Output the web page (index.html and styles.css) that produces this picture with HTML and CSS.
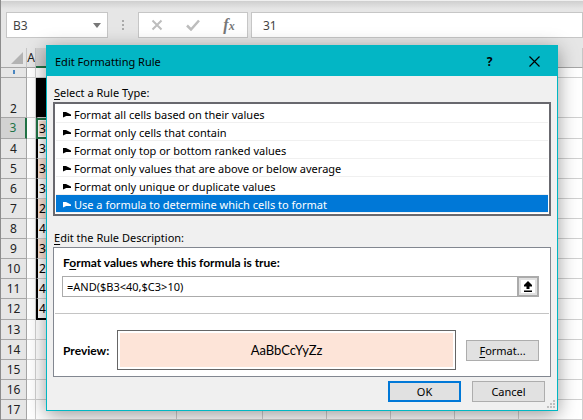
FILE: index.html
```html
<!DOCTYPE html>
<html lang="en">
<head>
  <meta charset="UTF-8">
  <meta name="viewport" content="width=device-width, initial-scale=1.0">
  <title>Edit Formatting Rule</title>
  <link rel="stylesheet" href="styles.css">
</head>
<body>
  <div class="workbook">
    <div class="formula-bar">
      <button type="button" class="name-box">
        <span>B3</span>
        <svg width="8" height="5" viewBox="0 0 8 5"><path d="M0 0h8L4 5z" fill="#777"/></svg>
      </button>
      <svg class="grip" width="2" height="10" viewBox="0 0 2 10"><path d="M0 0h2v2H0zM0 4h2v2H0zM0 8h2v2H0z" fill="#aaa"/></svg>
      <div class="formula-tools">
        <button type="button" class="tool" aria-label="Cancel entry">
          <svg width="12" height="12" viewBox="0 0 12 12"><path d="M1.500 1.500l9 9M10.500 1.500l-9 9" stroke="#bdbdbd" stroke-width="2" fill="none"/></svg>
        </button>
        <button type="button" class="tool" aria-label="Enter">
          <svg width="14" height="12" viewBox="0 0 14 12"><path d="M1 6.500l4 4 8-9" stroke="#bdbdbd" stroke-width="2.500" fill="none"/></svg>
        </button>
        <button type="button" class="tool fx" aria-label="Insert function"><i>f</i><i class="fx-small">x</i></button>
      </div>
      <input class="formula-input" type="text" value="31" aria-label="Formula bar">
    </div>

    <table class="sheet">
      <colgroup>
        <col class="col-head"><col class="col-a"><col class="col-b"><col class="col-c">
        <col class="col-std"><col class="col-std"><col class="col-std"><col class="col-std"><col class="col-std">
      </colgroup>
      <thead>
        <tr>
          <th class="corner"><svg width="12" height="12" viewBox="0 0 12 12"><path d="M12 0v12H0z" fill="#b3b3b3"/></svg></th>
          <th>A</th><th class="active"></th><th></th><th></th><th></th><th></th><th></th><th></th>
        </tr>
      </thead>
      <tbody>
        <tr class="row-1"><th><span class="tick"></span></th><td></td><td></td><td></td><td></td><td></td><td></td><td></td><td></td></tr>
        <tr class="row-2"><th>2</th><td></td><td class="data title"></td><td></td><td></td><td></td><td></td><td></td><td></td></tr>
        <tr class="tall"><th class="active">3</th><td></td><td class="data hit selected">31</td><td></td><td></td><td></td><td></td><td></td><td></td></tr>
        <tr><th>4</th><td></td><td class="data">38</td><td></td><td></td><td></td><td></td><td></td><td></td></tr>
        <tr><th>5</th><td></td><td class="data hit">36</td><td></td><td></td><td></td><td></td><td></td><td></td></tr>
        <tr><th>6</th><td></td><td class="data">35</td><td></td><td></td><td></td><td></td><td></td><td></td></tr>
        <tr><th>7</th><td></td><td class="data hit">28</td><td></td><td></td><td></td><td></td><td></td><td></td></tr>
        <tr><th>8</th><td></td><td class="data">41</td><td></td><td></td><td></td><td></td><td></td><td></td></tr>
        <tr><th>9</th><td></td><td class="data hit">34</td><td></td><td></td><td></td><td></td><td></td><td></td></tr>
        <tr><th>10</th><td></td><td class="data">27</td><td></td><td></td><td></td><td></td><td></td><td></td></tr>
        <tr><th>11</th><td></td><td class="data">42</td><td></td><td></td><td></td><td></td><td></td><td></td></tr>
        <tr class="tall"><th>12</th><td></td><td class="data last">45</td><td></td><td></td><td></td><td></td><td></td><td></td></tr>
        <tr><th>13</th><td></td><td></td><td></td><td></td><td></td><td></td><td></td><td></td></tr>
        <tr><th>14</th><td></td><td></td><td></td><td></td><td></td><td></td><td></td><td></td></tr>
        <tr><th>15</th><td></td><td></td><td></td><td></td><td></td><td></td><td></td><td></td></tr>
        <tr><th>16</th><td></td><td></td><td></td><td></td><td></td><td></td><td></td><td></td></tr>
        <tr><th>17</th><td></td><td></td><td></td><td></td><td></td><td></td><td></td><td></td></tr>
        <tr><th></th><td></td><td></td><td></td><td></td><td></td><td></td><td></td><td></td></tr>
      </tbody>
    </table>
  </div>

  <form class="dialog" role="dialog" aria-labelledby="dialogTitle">
    <div class="title-bar">
      <span id="dialogTitle">Edit Formatting Rule</span>
      <button type="button" class="title-button help" aria-label="Help">?</button>
      <button type="button" class="title-button" aria-label="Close">
        <svg width="11" height="11" viewBox="0 0 11 11"><path d="M.5.5l10 10M10.500.5l-10 10" stroke="#000" stroke-width="1.200" fill="none"/></svg>
      </button>
    </div>

    <div class="dialog-body">
      <div class="section-label" id="ruleTypeLabel"><u>S</u>elect a Rule Type:</div>
      <div class="rule-list" role="radiogroup" aria-labelledby="ruleTypeLabel">
        <label class="rule"><input type="radio" name="rule"><span>Format all cells based on their values</span></label>
        <label class="rule"><input type="radio" name="rule"><span>Format only cells that contain</span></label>
        <label class="rule"><input type="radio" name="rule"><span>Format only top or bottom ranked values</span></label>
        <label class="rule"><input type="radio" name="rule"><span>Format only values that are above or below average</span></label>
        <label class="rule"><input type="radio" name="rule"><span>Format only unique or duplicate values</span></label>
        <label class="rule"><input type="radio" name="rule" checked><span>Use a formula to determine which cells to format</span></label>
      </div>

      <div class="section-label description-label"><u>E</u>dit the Rule Description:</div>
      <div class="panel">
        <label class="bold" for="formula">F<u>o</u>rmat values where this formula is true:</label>
        <div class="formula-row">
          <input type="text" id="formula" value="=AND($B3&lt;40,$C3&gt;10)">
          <button type="button" class="collapse" aria-label="Collapse dialog">
            <svg width="10" height="11" viewBox="0 0 10 11"><path d="M5 0l4 4v1.500H6.500V8h-3V5.500H1V4zM1 9.500h8V11H1z" fill="#000"/></svg>
          </button>
        </div>
        <div class="divider"></div>
        <div class="preview-row">
          <span class="bold">Preview:</span>
          <div class="preview"><div class="preview-fill">AaBbCcYyZz</div></div>
          <button type="button" class="button"><span><u>F</u>ormat...</span></button>
        </div>
      </div>

      <div class="actions">
        <button type="submit" class="button default">OK</button>
        <button type="button" class="button">Cancel</button>
      </div>
    </div>
    <svg class="resize" width="8" height="8" viewBox="0 0 8 8"><path d="M6 0h2v2H6zM3 3h2v2H3zM6 3h2v2H6zM0 6h2v2H0zM3 6h2v2H3zM6 6h2v2H6z" fill="#bfbfbf"/></svg>
  </form>
</body>
</html>
```
FILE: styles.css
```css
* {
  box-sizing: border-box;
}
body {
  margin: 0;
  height: 100vh;
  overflow: hidden;
  position: relative;
  background-color: #e6e6e6;
  color: #000;
  font-family: "Noto Sans", "Open Sans", sans-serif;
  font-size: 12px;
}
button,
input {
  font: inherit;
  color: inherit;
  margin: 0;
  padding: 0;
}
u {
  text-underline-offset: 2px;
}

/* Workbook behind the dialog */
.workbook {
  border-left: 1px solid #8c8c8c;
  overflow: hidden;
}
.formula-bar {
  display: flex;
  align-items: center;
  height: 48px;
  padding: 2px 0 0 5px;
  background: linear-gradient(#f0f0f0 1px, #cfcfcf 1px, #e6e6e6 9px);
}
.name-box,
.formula-tools,
.formula-input {
  height: 26px;
  background-color: #fff;
  border: 1px solid #c6c6c6;
}
.name-box {
  display: flex;
  align-items: center;
  justify-content: space-between;
  width: 102px;
  padding: 0 6px;
  color: #444;
}
.grip {
  margin: 0 14px;
}
.formula-tools {
  display: flex;
  align-items: center;
  justify-content: space-around;
  width: 110px;
  margin-right: 3px;
}
.tool {
  display: flex;
  align-items: center;
  justify-content: center;
  width: 24px;
  border: none;
  background: none;
}
.fx {
  align-items: baseline;
  font: bold 16px "Liberation Serif", serif;
  color: #777;
}
.fx-small {
  font-size: 12px;
}
.formula-input {
  flex: 1;
  min-width: 0;
  padding: 0 11px;
  color: #444;
}

.sheet {
  width: 582px;
  table-layout: fixed;
  border-collapse: separate;
  border-spacing: 0;
  background-color: #fff;
  line-height: 16px;
}
.col-head {
  width: 26px;
}
.col-a {
  width: 9px;
}
.col-b {
  width: 141px;
}
.col-c {
  width: 86px;
}
.col-std {
  width: 64px;
}
.sheet th,
.sheet td {
  height: 20px;
  padding: 0;
  border-right: 1px solid #d0d0d0;
  border-bottom: 1px solid #d0d0d0;
  overflow: hidden;
}
.sheet th {
  background-color: #e6e6e6;
  border-color: #a6a6a6;
  color: #222;
  font-weight: normal;
}
.sheet thead th {
  border-right-color: #c6c6c6;
}
.sheet thead .active {
  background-color: #d2d2d2;
  border-bottom: 2px solid #217346;
}
.sheet .corner {
  padding-left: 10px;
}
.corner svg {
  display: block;
}
.sheet .row-1 th,
.sheet .row-1 td {
  height: 10px;
  line-height: 4px;
  vertical-align: top;
}
.tick {
  display: inline-block;
  width: 2px;
  height: 4px;
  background-color: #4a86c0;
}
.sheet .row-2 th,
.sheet .row-2 td {
  height: 40px;
  vertical-align: bottom;
}
.sheet .tall th,
.sheet .tall td {
  height: 21px;
}
.sheet tbody .active {
  background-color: #d2d2d2;
  border-right: 2px solid #217346;
  color: #217346;
}
.sheet .data {
  padding-left: 1px;
  border-left: 2px solid #000;
}
.sheet .title {
  background-color: #000;
}
.sheet .hit {
  background-color: #fce4d6;
}
.sheet .selected {
  border: 2px solid #217346;
  box-shadow: inset 0 0 0 1px #fff;
}
.sheet .last {
  border-bottom: 2px solid #000;
}

/* Dialog */
.dialog {
  position: absolute;
  top: 45px;
  left: 46px;
  right: 25px;
  background-color: #f0f0f0;
  border: 1px solid #00b7c3;
  box-shadow: 0 4px 18px rgba(0, 0, 0, 0.4);
  font-size: 11px;
}
.title-bar {
  display: flex;
  align-items: center;
  height: 30px;
  padding-left: 8px;
  background-color: #03b6c5;
}
.title-bar span {
  flex: 1;
}
.title-button {
  display: flex;
  align-items: center;
  justify-content: center;
  width: 45px;
  height: 30px;
  border: none;
  background: none;
}
.help {
  font-size: 12px;
  font-weight: bold;
}
.dialog-body {
  padding: 8px 6px;
}
.section-label {
  height: 18px;
  line-height: 18px;
  padding-left: 1px;
}
.description-label {
  margin-top: 13px;
}
.rule-list {
  padding: 1px;
  background-color: #fff;
  border: 2px solid #68686e;
}
.rule {
  display: flex;
  align-items: center;
  gap: 3px;
  height: 18px;
  padding: 2px 0 0 7px;
  border-bottom: 1px solid #f0f0f0;
}
.rule input {
  appearance: none;
  width: 8px;
  height: 6px;
  background-color: #000;
  clip-path: polygon(0 0, 25% 0, 100% 50%, 100% 75%, 40% 75%, 0 100%);
}
.rule:has(input:checked) {
  background-color: #0078d7;
  color: #fff;
}
.rule input:checked {
  background-color: #fff;
}
.panel {
  height: 130px;
  padding: 6px 1px 0;
  background-color: #fff;
  border: 1px solid #828790;
}
.bold {
  font-family: Lato, sans-serif;
  font-size: 12px;
  font-weight: bold;
}
.panel > .bold {
  display: block;
  height: 22px;
  line-height: 18px;
  padding-left: 8px;
}
.formula-row {
  display: flex;
  height: 21px;
  margin: 0 10px 0 7px;
}
.formula-row input {
  flex: 1;
  min-width: 0;
  padding: 0 4px;
  border: 1px solid #ababab;
  border-right: none;
}
.collapse {
  display: flex;
  align-items: center;
  justify-content: center;
  width: 22px;
  border: 2px solid #ababab;
  outline: 2px solid #e1e1e1;
  outline-offset: -4px;
  background-color: #fff;
}
.divider {
  height: 1px;
  margin-top: 16px;
  background-color: #c4c4c4;
}
.preview-row {
  display: flex;
  align-items: center;
  gap: 10px;
  margin: 16px 10px 0 8px;
}
.preview-row .bold {
  width: 44px;
}
.preview {
  flex: 1;
  height: 40px;
  padding: 2px;
  border: 1px solid #666;
}
.preview-fill {
  height: 34px;
  line-height: 34px;
  background-color: #fde4d8;
  font-family: Lato, sans-serif;
  font-size: 13px;
  text-align: center;
}
.button {
  width: 73px;
  height: 21px;
  background-color: #e1e1e1;
  border: 1px solid #adadad;
}
.default {
  border: 2px solid #0078d7;
}
.actions {
  display: flex;
  justify-content: flex-end;
  gap: 11px;
  padding: 4px 6px 0 0;
}
.resize {
  position: absolute;
  right: 2px;
  bottom: 2px;
}
```
